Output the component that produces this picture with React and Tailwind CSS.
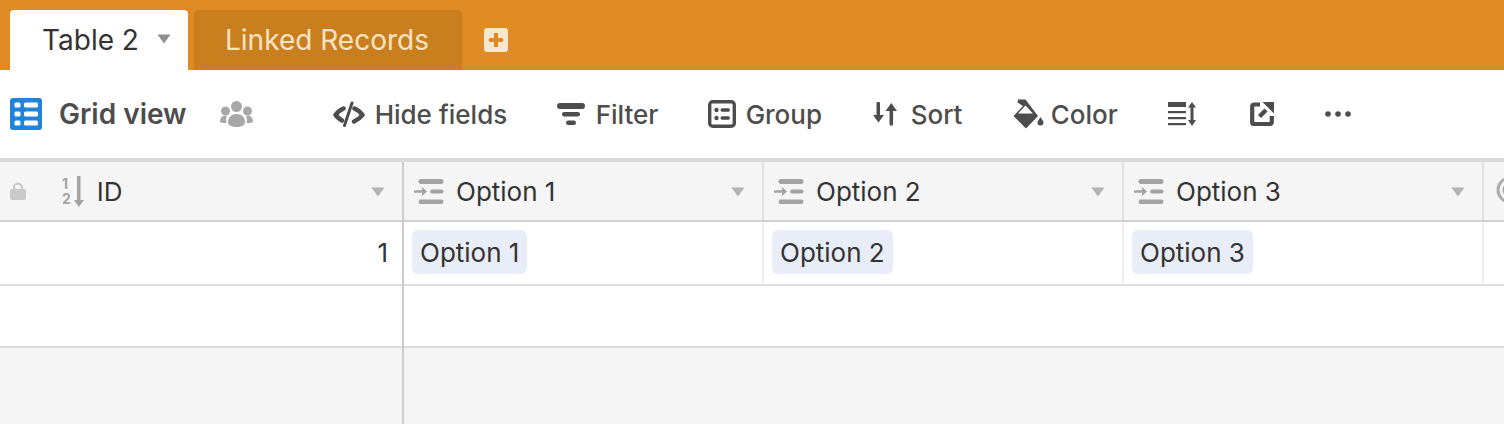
const Caret = ({ className }) => (
  <svg width="14" height="10" viewBox="0 0 14 10" className={className}>
    <path d="M0.5 0.5h13L7 9.5z" fill="currentColor" />
  </svg>
);

const GridIcon = () => (
  <svg width="32" height="32" viewBox="0 0 32 32">
    <rect width="32" height="32" rx="3" fill="#2184d8" />
    <g fill="#fff">
      <rect x="4.5" y="4.500" width="6" height="5" rx="1.500" />
      <rect x="14" y="4.500" width="14" height="5" rx="1.500" />
      <rect x="4.5" y="13.500" width="6" height="5" rx="1.500" />
      <rect x="14" y="13.500" width="14" height="5" rx="1.500" />
      <rect x="4.5" y="22.500" width="6" height="5" rx="1.500" />
      <rect x="14" y="22.500" width="14" height="5" rx="1.500" />
    </g>
  </svg>
);

const PeopleIcon = () => (
  <svg width="33" height="26" viewBox="0 0 33 26" fill="#a8a8a8">
    <circle cx="16.500" cy="5.500" r="5.500" />
    <circle cx="5.500" cy="10" r="4.500" />
    <circle cx="27.500" cy="10" r="4.500" />
    <path d="M8 21c0-5 3.500-8 8.500-8s8.500 3 8.500 8c0 3.500-3.500 5-8.500 5S8 24.500 8 21z" />
    <path d="M0 20c0-3 2-5 4.500-5.500l2.500.5C6 16.500 6 19 6.500 22 3 22 0 22 0 20z" />
    <path d="M33 20c0-3-2-5-4.500-5.500L26 15c1 1.500 1 4 .5 7 3.500 0 6.500 0 6.500-2z" />
  </svg>
);

const HideIcon = () => (
  <svg width="32" height="26" viewBox="0 0 32 26" fill="none" stroke="#4d4d4d" strokeWidth="4.500" strokeLinecap="round" strokeLinejoin="round">
    <path d="M19 2 11.500 24.500" strokeWidth="3" />
    <path d="M10.500 7.500Q5 10 2.500 14q2.500 3 6.500 5.500" />
    <path d="M21.500 7.500Q27 10 29.500 14q-3 4-8.500 6.500" />
  </svg>
);

const FilterIcon = () => (
  <svg width="28" height="22" viewBox="0 0 28 22" fill="#4d4d4d">
    <rect x="0" y="0" width="28" height="6" rx="3" />
    <rect x="5" y="9" width="18" height="4.500" rx="2.200" />
    <rect x="9" y="17.500" width="10" height="4.500" rx="2.200" />
  </svg>
);

const GroupIcon = () => (
  <svg width="28" height="28" viewBox="0 0 28 28">
    <rect x="1.700" y="1.700" width="24.600" height="24.600" rx="3" fill="none" stroke="#4d4d4d" strokeWidth="3.400" />
    <g fill="#4d4d4d">
      <circle cx="8.500" cy="10" r="2.200" />
      <circle cx="8.500" cy="18" r="2.200" />
      <rect x="12.500" y="8.300" width="9.500" height="3.400" rx="1.700" />
      <rect x="12.500" y="16.300" width="9.500" height="3.400" rx="1.700" />
    </g>
  </svg>
);

const SortIcon = () => (
  <svg width="24" height="24" viewBox="0 0 24 24" fill="#4d4d4d">
    <path d="M3.500 1.500a1.700 1.700 0 0 1 3.500 0V13h4l-5.500 7.500L0 13h3.500z" />
    <path d="M16.500 22a1.800 1.800 0 0 0 3.600 0V9H24L18.300 1 12.500 9h4z" />
  </svg>
);

const ColorIcon = () => (
  <svg width="31" height="30" viewBox="0 0 31 30" fill="#4d4d4d">
    <path
      d="M5 0.500h7.500L25 17 13 29.500 0.500 17 10 7 4.500 3.500zM12.500 6.500 5 14.500h15z"
      fillRule="evenodd"
    />
    <path d="M27.500 18c1 2.200 3 3.700 3 5.500a3 3 0 0 1-6 0c0-1.800 2-3.300 3-5.500z" />
  </svg>
);

const RowHeightIcon = () => (
  <svg width="28" height="24" viewBox="0 0 28 24" fill="#4d4d4d">
    <rect x="0" y="0" width="18" height="5" />
    <rect x="0" y="9" width="18" height="2.200" />
    <rect x="0" y="15" width="18" height="2.200" />
    <rect x="0" y="21" width="18" height="2.200" />
    <path d="M24 0l4 5.500h-2.500v12.500H28L24 24l-4-6h2.500V5.500H20z" />
  </svg>
);

const ShareIcon = () => (
  <svg width="24" height="24" viewBox="0 0 24 24" fill="none" stroke="#4d4d4d">
    <path d="M10 2.500H4A1.800 1.800 0 0 0 2.200 4.300v16A1.800 1.800 0 0 0 4 22h16a1.800 1.800 0 0 0 1.800-1.800V14" strokeWidth="4.200" />
    <path d="M9.500 14.500 16 8" strokeWidth="4.500" />
    <path d="M12.500 0H24v11.500z" fill="#4d4d4d" stroke="none" />
  </svg>
);

const DotsIcon = () => (
  <svg width="26" height="6" viewBox="0 0 26 6" fill="#4d4d4d">
    <circle cx="3" cy="3" r="2.800" />
    <circle cx="13" cy="3" r="2.800" />
    <circle cx="23" cy="3" r="2.800" />
  </svg>
);

const LockIcon = () => (
  <svg width="16" height="18" viewBox="0 0 16 18" fill="#c9c9c9">
    <path d="M3 7V5.500a5 5 0 0 1 10 0V7h-2.200V5.500a2.800 2.800 0 0 0-5.600 0V7z" />
    <rect x="0" y="7" width="16" height="11" rx="2" />
  </svg>
);

// digits are real text beside the drawn arrow
const NumberSortIcon = () => (
  <div className="flex items-center gap-[3px] text-[#a3a3a3]">
    <div className="flex flex-col text-[14px] leading-[15px] font-bold">
      <span>1</span>
      <span>2</span>
    </div>
    <svg width="10" height="31" viewBox="0 0 10 31" fill="currentColor">
      <path d="M3 0h3.500v24H10l-5.200 7L0 24h3z" />
    </svg>
  </div>
);

const SelectIcon = () => (
  <svg width="30" height="25" viewBox="0 0 30 25" fill="#a3a3a3">
    <rect x="4.500" y="0" width="25" height="5" rx="2.500" />
    <rect x="16" y="10.500" width="13.500" height="4" rx="2" />
    <path d="M0 11.200h8V8l5 4.500L8 17v-3.300H0z" />
    <rect x="4.500" y="20.500" width="25" height="4.500" rx="2.200" />
  </svg>
);

const toolbarItems = [
  { label: "Hide fields", icon: <HideIcon />, gap: "gap-2.5", width: "w-[224px]" },
  { label: "Filter", icon: <FilterIcon />, gap: "gap-[11px]", width: "w-[151px]" },
  { label: "Group", icon: <GroupIcon />, gap: "gap-2.5", width: "w-[165px]" },
  { label: "Sort", icon: <SortIcon />, gap: "gap-[14px]", width: "w-[140px]" },
  { label: "Color", icon: <ColorIcon />, gap: "gap-[7px]", width: "w-[155px]" },
];

const options = ["Option 1", "Option 2", "Option 3"];

export default function App() {
  return (
    <div className="w-[1504px] h-[424px] overflow-hidden bg-white flex flex-col font-['Inter',sans-serif] text-[#333333]">
      {/* Tab bar */}
      <div className="h-[70px] shrink-0 bg-[#de8b23] flex items-end pl-2.5">
        <div className="w-[178px] h-[60px] bg-white rounded-t-[4px] flex items-center pl-[32px] text-[28px]">
          <span>Table 2</span>
          <Caret className="ml-[18px] mb-0.5 text-[#8f8f8f]" />
        </div>
        <div className="w-[268px] h-[60px] ml-1.5 bg-[#c97f1d] rounded-t-[4px] flex items-center pl-[31px] text-[28px] text-[#f8e3c6]">
          Linked Records
        </div>
        <div className="h-[60px] ml-[22px] flex items-center">
          <div className="w-6 h-6 rounded-[3px] bg-[#f8e6cf] flex items-center justify-center">
            <svg width="16" height="16" viewBox="0 0 16 16" fill="#de8b23">
              <path d="M6 1h4v5h5v4h-5v5H6v-5H1V6h5z" />
            </svg>
          </div>
        </div>
      </div>

      {/* Toolbar */}
      <div className="h-[88px] shrink-0 flex items-center pl-2.5 text-[#4d4d4d] text-[26px]">
        <GridIcon />
        <span className="ml-[17px] font-semibold text-[28px]">Grid view</span>
        <div className="ml-[33px] mr-[80px]">
          <PeopleIcon />
        </div>
        {toolbarItems.map((item) => (
          <div key={item.label} className={`flex items-center ${item.gap} ${item.width} font-medium`}>
            {item.icon}
            <span>{item.label}</span>
          </div>
        ))}
        <div className="w-[82px]">
          <RowHeightIcon />
        </div>
        <div className="w-[75px]">
          <ShareIcon />
        </div>
        <DotsIcon />
      </div>

      {/* Grid */}
      <div className="flex-1 bg-[#f5f5f5] border-t-4 border-[#d9d9d9] flex min-h-0">
        <div className="w-[404px] shrink-0 border-r-2 border-[#cccccc]">
          <div className="h-[60px] border-b-2 border-[#d0d0d0] flex items-center pl-2.5 pr-[17px] text-[26px]">
            <LockIcon />
            <div className="ml-[36px]">
              <NumberSortIcon />
            </div>
            <span className="ml-[13px] flex-1">ID</span>
            <Caret className="mt-0.5 text-[#b3b3b3]" />
          </div>
          <div className="h-16 bg-white border-b-2 border-[#dedede] flex items-center justify-end pr-[14px] pb-0.5 text-[26px]">
            1
          </div>
          <div className="h-[62px] bg-white border-b-2 border-[#dedede]" />
        </div>
        <div className="flex-1 min-w-0">
          <div className="h-[60px] border-b-2 border-[#d0d0d0] flex">
            {options.map((name) => (
              <div key={name} className="w-[360px] shrink-0 border-r-2 border-[#e0e0e0] flex items-center pl-2.5 pr-[17px] text-[26px]">
                <SelectIcon />
                <span className="ml-3 flex-1">{name}</span>
                <Caret className="mt-0.5 text-[#b3b3b3]" />
              </div>
            ))}
            <div className="flex-1 flex items-center pl-3 pb-0.5 overflow-hidden">
              <svg width="28" height="28" viewBox="0 0 28 28" fill="none" stroke="#aaaaaa" strokeWidth="3" className="shrink-0">
                <circle cx="14" cy="14" r="12" />
                <circle cx="14" cy="14" r="6" />
              </svg>
            </div>
          </div>
          <div className="h-16 bg-white border-b-2 border-[#dedede] flex">
            {options.map((name) => (
              <div key={name} className="w-[360px] shrink-0 border-r-2 border-[#f0f0f0] flex items-center pl-2 pb-0.5">
                <span className="h-11 px-2 flex items-center rounded-md bg-[#e9edf8] text-[26px]">{name}</span>
              </div>
            ))}
          </div>
          <div className="h-[62px] bg-white border-b-2 border-[#dedede]" />
        </div>
      </div>
    </div>
  );
}
